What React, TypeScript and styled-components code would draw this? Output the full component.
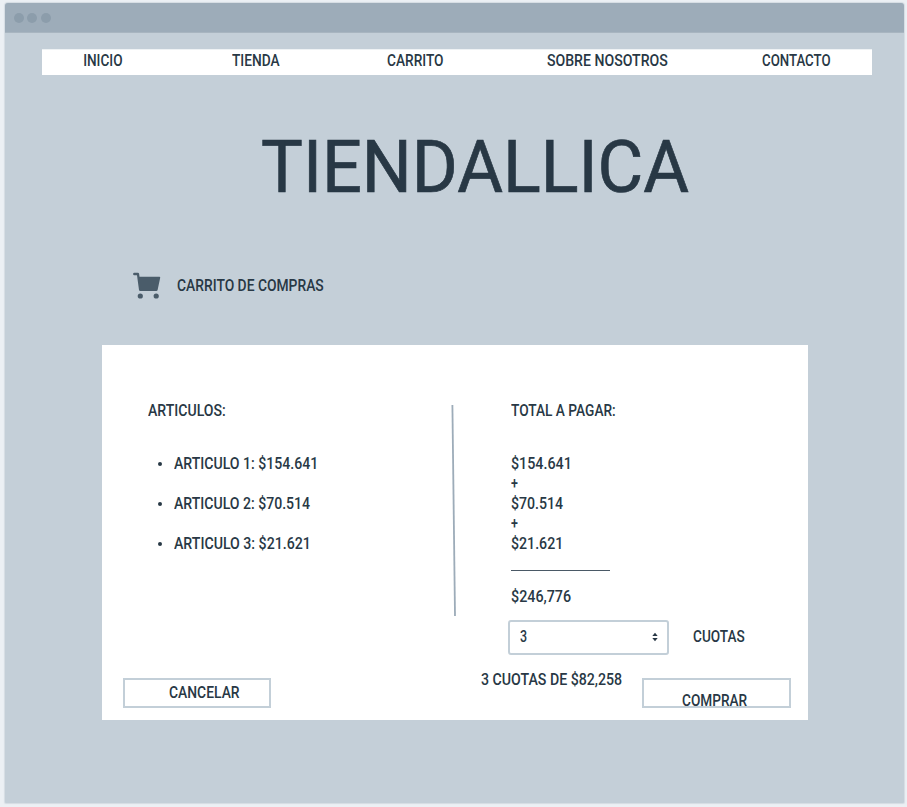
import React, { useLayoutEffect, useState } from "react";
import styled, { createGlobalStyle } from "styled-components";

const ink = "#283845";

const GlobalStyle = createGlobalStyle`
  * { box-sizing: border-box; }
  html, body { margin: 0; background: #ecf0f4; }
  body { font-family: Roboto, "Open Sans", sans-serif; color: ${ink}; overflow: hidden; }
`;

const Screen = styled.div`
  width: 907px;
  height: 807px;
  padding: 3px 3px 4px 4.5px;
`;

const Browser = styled.div`
  width: 899.5px;
  height: 799.5px;
  background: #c4cfd8;
  border-radius: 3px 3px 1px 1px;
  overflow: hidden;
  box-shadow: 0 0 1px 1px #d5dce3;
`;

const TitleBar = styled.header`
  height: 30px;
  display: flex;
  align-items: center;
  gap: 3.3px;
  padding-left: 9.5px;
  background: #9dacb9;
  border-bottom: 1px solid #a8b5c0;
`;

const Dot = styled.i`
  width: 10px;
  height: 10px;
  border-radius: 50%;
  background: #8c9dab;
`;

const Nav = styled.nav`
  display: flex;
  width: 830px;
  height: 26px;
  margin: 16px 0 0 37.5px;
  padding: 1.4px 0 0 42px;
  background: #fff;
  border-top: 1px solid #eef2f4;
`;

const NavItem = styled.a<{ $slot: number }>`
  flex: 0 0 ${(p) => p.$slot}px;
`;

const LabelBox = styled.span<{ $width: number; $size: number }>`
  display: block;
  width: ${(p) => p.$width}px;
  font-size: ${(p) => p.$size}px;
  font-weight: ${(p) => (p.$size > 30 ? 400 : 500)};
  line-height: ${(p) => p.$size * 1.25}px;
  white-space: nowrap;
`;

const LabelText = styled.span`
  display: inline-block;
  vertical-align: top;
  transform-origin: 0 50%;
`;

/* Condenses a label horizontally so its glyphs span the given width. */
function Label({ text, width, size = 16 }: { text: string; width: number; size?: number }) {
  const [transform, setTransform] = useState("none");
  useLayoutEffect(() => {
    const ctx = document.createElement("canvas").getContext("2d");
    if (!ctx) return;
    ctx.font = `${size > 30 ? 400 : 500} ${size}px Roboto`;
    const m = ctx.measureText(text);
    const scale = width / (m.actualBoundingBoxLeft + m.actualBoundingBoxRight);
    setTransform(`translateX(${m.actualBoundingBoxLeft * scale}px) scaleX(${scale})`);
  }, [text, width, size]);
  return (
    <LabelBox $width={width} $size={size}>
      <LabelText style={{ transform }}>{text}</LabelText>
    </LabelBox>
  );
}

const Brand = styled.h1`
  margin: 48px 0 0 257.5px;
  height: 90px;
  -webkit-text-stroke: 0.7px ${ink};
`;

const SectionTitle = styled.div`
  display: flex;
  align-items: center;
  gap: 16px;
  height: 30px;
  margin: 57.5px 0 0 128.5px;
`;

const CartIcon = styled.svg`
  width: 28px;
  height: 30px;
  fill: #4a5c6a;
`;

const Panel = styled.main`
  width: 706px;
  height: 375.5px;
  margin: 44px 0 0 97.5px;
  padding-top: 56.5px;
  background: #fff;
`;

const Body = styled.section`
  display: flex;
  height: 219px;
  padding-left: 46px;
`;

const Articles = styled.div`
  width: 303px;
`;

const ArticleList = styled.ul`
  display: flex;
  flex-direction: column;
  gap: 20px;
  margin: 33px 0 0;
  padding: 0;
  list-style: none;
`;

const Article = styled.li`
  display: flex;
  align-items: center;
  gap: 12px;
  padding-left: 10.3px;
  &::before {
    content: "";
    width: 4px;
    height: 4px;
    border-radius: 50%;
    background: ${ink};
  }
`;

const Divider = styled.svg`
  width: 8px;
  height: 216px;
  fill: none;
  stroke: #9dacb9;
  stroke-width: 1.8;
`;

const Totals = styled.div`
  padding-left: 52px;
`;

const Sums = styled.div`
  margin-top: 33px;
`;

const SumLine = styled.div`
  width: 99px;
  height: 1px;
  margin: 16px 0 16px;
  background: #4a5966;
`;

const Installments = styled.div`
  display: flex;
  align-items: center;
  gap: 24px;
  height: 34.5px;
  padding-left: 405.5px;
`;

const Select = styled.div`
  display: flex;
  align-items: center;
  justify-content: space-between;
  width: 161.5px;
  height: 34.5px;
  padding: 0 9.5px 0 10px;
  border: 2px solid #c3cfd8;
  border-radius: 3px;
`;

const Arrows = styled.svg`
  width: 6px;
  height: 10px;
  fill: ${ink};
`;

const Footer = styled.footer`
  display: flex;
  align-items: flex-start;
  height: 40px;
  padding: 0 0 0 20.5px;
  margin-top: 23px;
`;

const Summary = styled.div`
  width: 161px;
  margin: -8px 0 0 210px;
`;

const Button = styled.button<{ $top: number; $left: number }>`
  width: 148.5px;
  height: 30px;
  padding: ${(p) => p.$top}px 0 0 ${(p) => p.$left}px;
  border: 2px solid #c3cfd8;
  background: transparent;
  display: flex;
  align-items: flex-start;
  font-family: inherit;
  color: inherit;
`;

const navItems = [
  { text: "INICIO", width: 38.5, slot: 148 },
  { text: "TIENDA", width: 48, slot: 155 },
  { text: "CARRITO", width: 56.5, slot: 160 },
  { text: "SOBRE NOSOTROS", width: 121, slot: 215 },
  { text: "CONTACTO", width: 68.5, slot: 69 },
];

const articles = [
  { text: "ARTICULO 1: $154.641", width: 141.5 },
  { text: "ARTICULO 2: $70.514", width: 136 },
  { text: "ARTICULO 3: $21.621", width: 134 },
];

const sums = [
  { text: "$154.641", width: 58 },
  { text: "+", width: 7 },
  { text: "$70.514", width: 52 },
  { text: "+", width: 7 },
  { text: "$21.621", width: 49.5 },
];

export default function App() {
  return (
    <Screen>
      <GlobalStyle />
      <Browser>
        <TitleBar><Dot /><Dot /><Dot /></TitleBar>
        <Nav>
          {navItems.map((n) => (
            <NavItem key={n.text} $slot={n.slot}><Label text={n.text} width={n.width} /></NavItem>
          ))}
        </Nav>
        <Brand><Label text="TIENDALLICA" width={427} size={72} /></Brand>
        <SectionTitle>
          <CartIcon viewBox="0 0 28 30">
            <path d="M1.3 1.8h3.6q1 0 1.2 1l.4 2.9h19.9q1 0 .8 1L24.6 19q-.2 1-1.3 1H7.2q-1 0-1.2-1L4 4.2H1.3a1.2 1.2 0 0 1 0-2.4z" />
            <circle cx="7.3" cy="25" r="2.6" />
            <circle cx="23.2" cy="25" r="2.6" />
          </CartIcon>
          <Label text="CARRITO DE COMPRAS" width={147} />
        </SectionTitle>
        <Panel>
          <Body>
            <Articles>
              <Label text="ARTICULOS:" width={77.5} />
              <ArticleList>
                {articles.map((a) => (
                  <Article key={a.text}><Label text={a.text} width={a.width} /></Article>
                ))}
              </ArticleList>
            </Articles>
            <Divider viewBox="0 0 8 216"><path d="M1.4 4L4 215" /></Divider>
            <Totals>
              <Label text="TOTAL A PAGAR:" width={104.5} />
              <Sums>
                {sums.map((s, i) => <Label key={i} text={s.text} width={s.width} />)}
              </Sums>
              <SumLine />
              <Label text="$246,776" width={60} />
            </Totals>
          </Body>
          <Installments>
            <Select>
              <Label text="3" width={7} />
              <Arrows viewBox="0 0 6 10"><path d="M.3 4L3 .8 5.7 4zM.3 6h5.4L3 9.2z" /></Arrows>
            </Select>
            <Label text="CUOTAS" width={52} />
          </Installments>
          <Footer>
            <Button $top={3} $left={44}><Label text="CANCELAR" width={70.5} /></Button>
            <Summary><Label text="3 CUOTAS DE $82,258" width={141} /></Summary>
            <Button $top={11} $left={38}><Label text="COMPRAR" width={65} /></Button>
          </Footer>
        </Panel>
      </Browser>
    </Screen>
  );
}
